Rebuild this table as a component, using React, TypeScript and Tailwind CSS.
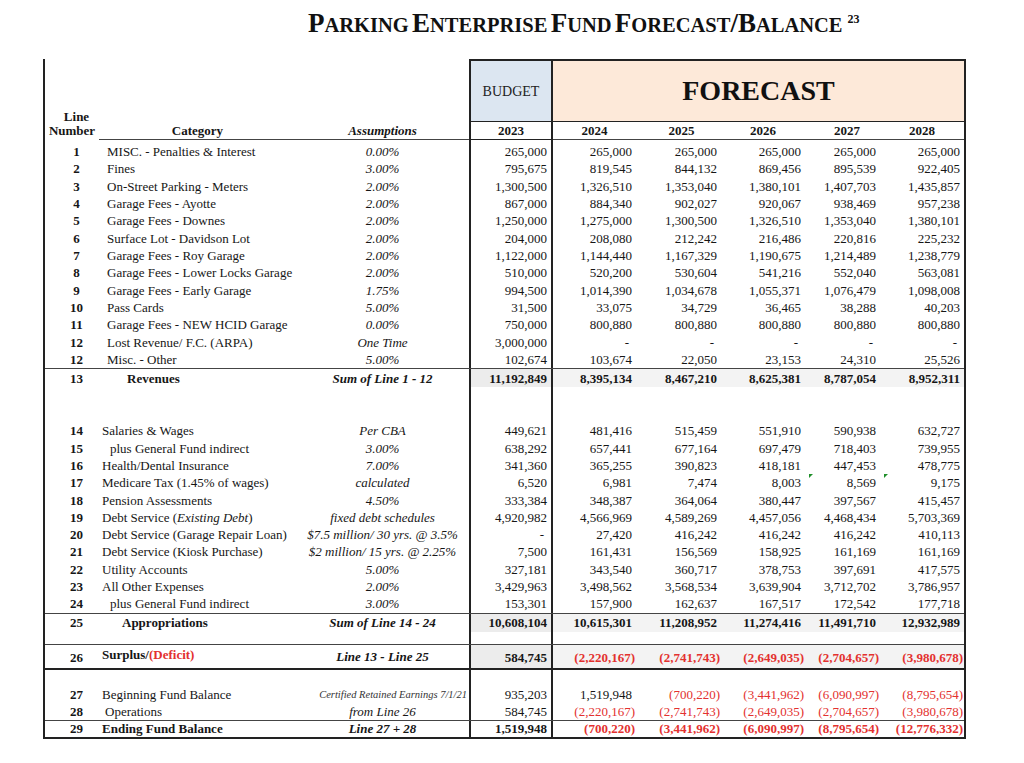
import React from 'react'

const cols = [
  'w-[54px]',
  'w-[197px]',
  'w-[173px]',
  'w-[84px]',
  'w-[83px]',
  'w-[85px]',
  'w-[84px]',
  'w-[75px]',
  'w-[84px]',
]

const red = 'text-[#e3312f]'

interface RowProps {
  h: string
  n?: string
  label?: React.ReactNode
  labelClass?: string
  assume?: React.ReactNode
  assumeClass?: string
  values?: string[]
  bold?: boolean
  shade?: boolean
  align?: string
  border?: string
  marks?: number[]
}

function Amount({ v, bold }: { v: string; bold?: boolean }) {
  const neg = v.startsWith('(')
  const dash = v === '-'
  return (
    <span
      className={`${neg ? red : ''} ${bold ? 'font-bold' : ''} ${
        dash ? 'pr-[7px]' : neg ? 'pr-[1px]' : 'pr-[4px]'
      }`}
    >
      {v}
    </span>
  )
}

function Row({
  h,
  n,
  label,
  labelClass = 'pl-[8px]',
  assume,
  assumeClass = 'justify-center',
  values = ['', '', '', '', '', ''],
  bold,
  shade,
  align = 'items-center',
  border = '',
  marks = [],
}: RowProps) {
  return (
    <div className={`flex ${h} ${border}`}>
      <div className={`${cols[0]} flex ${align} justify-center pl-[9px] font-bold`}>{n}</div>
      <div className={`${cols[1]} flex ${align} whitespace-nowrap ${labelClass} ${bold ? 'font-bold' : ''}`}>
        {label}
      </div>
      <div className={`${cols[2]} flex ${align} whitespace-nowrap italic ${assumeClass} ${bold ? 'font-bold' : ''}`}>
        {assume}
      </div>
      {values.map((v, i) => (
        <div
          key={i}
          className={`${cols[i + 3]} relative flex ${align} justify-end ${
            i === 0 ? 'border-x-2 border-[#222]' : ''
          } ${shade ? (i === 0 ? 'bg-[#ececec]' : 'bg-[#f3f3f3]') : ''}`}
        >
          {marks.includes(i) && (
            <span className="absolute top-0 left-[4px] h-0 w-0 border-t-[4px] border-r-[4px] border-t-[#1f8f2a] border-r-transparent" />
          )}
          {v && <Amount v={v} bold={bold} />}
        </div>
      ))}
    </div>
  )
}

const revenues: [string, string, string, string[]][] = [
  ['1', 'MISC. - Penalties & Interest', '0.00%', ['265,000', '265,000', '265,000', '265,000', '265,000', '265,000']],
  ['2', 'Fines', '3.00%', ['795,675', '819,545', '844,132', '869,456', '895,539', '922,405']],
  ['3', 'On-Street Parking - Meters', '2.00%', ['1,300,500', '1,326,510', '1,353,040', '1,380,101', '1,407,703', '1,435,857']],
  ['4', 'Garage Fees - Ayotte', '2.00%', ['867,000', '884,340', '902,027', '920,067', '938,469', '957,238']],
  ['5', 'Garage Fees - Downes', '2.00%', ['1,250,000', '1,275,000', '1,300,500', '1,326,510', '1,353,040', '1,380,101']],
  ['6', 'Surface Lot - Davidson Lot', '2.00%', ['204,000', '208,080', '212,242', '216,486', '220,816', '225,232']],
  ['7', 'Garage Fees - Roy Garage', '2.00%', ['1,122,000', '1,144,440', '1,167,329', '1,190,675', '1,214,489', '1,238,779']],
  ['8', 'Garage Fees - Lower Locks Garage', '2.00%', ['510,000', '520,200', '530,604', '541,216', '552,040', '563,081']],
  ['9', 'Garage Fees - Early Garage', '1.75%', ['994,500', '1,014,390', '1,034,678', '1,055,371', '1,076,479', '1,098,008']],
  ['10', 'Pass Cards', '5.00%', ['31,500', '33,075', '34,729', '36,465', '38,288', '40,203']],
  ['11', 'Garage Fees - NEW HCID Garage', '0.00%', ['750,000', '800,880', '800,880', '800,880', '800,880', '800,880']],
  ['12', 'Lost Revenue/ F.C. (ARPA)', 'One Time', ['3,000,000', '-', '-', '-', '-', '-']],
  ['12', 'Misc. - Other', '5.00%', ['102,674', '103,674', '22,050', '23,153', '24,310', '25,526']],
]

const expenses: [string, React.ReactNode, string, string[], string?][] = [
  ['14', 'Salaries & Wages', 'Per CBA', ['449,621', '481,416', '515,459', '551,910', '590,938', '632,727'], 'pl-[3px]'],
  ['15', 'plus General Fund indirect', '3.00%', ['638,292', '657,441', '677,164', '697,479', '718,403', '739,955'], 'pl-[11px]'],
  ['16', 'Health/Dental Insurance', '7.00%', ['341,360', '365,255', '390,823', '418,181', '447,453', '478,775'], 'pl-[3px]'],
  ['17', 'Medicare Tax (1.45% of wages)', 'calculated', ['6,520', '6,981', '7,474', '8,003', '8,569', '9,175'], 'pl-[3px]'],
  ['18', 'Pension Assessments', '4.50%', ['333,384', '348,387', '364,064', '380,447', '397,567', '415,457'], 'pl-[3px]'],
  [
    '19',
    <>
      Debt Service (<i>Existing Debt</i>)
    </>,
    'fixed debt schedules',
    ['4,920,982', '4,566,969', '4,589,269', '4,457,056', '4,468,434', '5,703,369'],
    'pl-[3px]',
  ],
  ['20', 'Debt Service (Garage Repair Loan)', '$7.5 million/ 30 yrs. @ 3.5%', ['-', '27,420', '416,242', '416,242', '416,242', '410,113'], 'pl-[3px]'],
  ['21', 'Debt Service (Kiosk Purchase)', '$2 million/ 15 yrs. @ 2.25%', ['7,500', '161,431', '156,569', '158,925', '161,169', '161,169'], 'pl-[3px]'],
  ['22', 'Utility Accounts', '5.00%', ['327,181', '343,540', '360,717', '378,753', '397,691', '417,575'], 'pl-[3px]'],
  ['23', 'All Other Expenses', '2.00%', ['3,429,963', '3,498,562', '3,568,534', '3,639,904', '3,712,702', '3,786,957'], 'pl-[3px]'],
  ['24', 'plus General Fund indirect', '3.00%', ['153,301', '157,900', '162,637', '167,517', '172,542', '177,718'], 'pl-[11px]'],
]

function Sc({ w }: { w: string }) {
  return (
    <>
      <span className="text-[27px]">{w[0]}</span>
      <span className="text-[20.5px]">{w.slice(1)}</span>
    </>
  )
}

export default function App() {
  return (
    <div className="h-[763px] w-[1024px] overflow-hidden bg-white font-['Liberation_Serif','Times_New_Roman',serif] text-[13px] text-[#161616]">
      <div className="flex h-[59px] items-start pl-[308px] pt-[7px] font-bold text-[#111]">
        <h1 className="whitespace-nowrap leading-[32px]">
          <Sc w="PARKING" /> <Sc w="ENTERPRISE" /> <Sc w="FUND" /> <Sc w="FORECAST" />
          <span className="text-[27px]">/</span>
          <Sc w="BALANCE" />
        </h1>
        <span className="ml-[5px] mt-[6px] text-[12px] leading-[12px]">23</span>
      </div>

      <div className="ml-[43px] w-[923px] border-x-2 border-b-2 border-[#222]">
        {/* header block */}
        <div className="flex h-[63px]">
          <div className={`${cols[0]} flex items-end justify-center pl-[9px] font-bold leading-[11px]`}>Line</div>
          <div className={cols[1]} />
          <div className={cols[2]} />
          <div className={`${cols[3]} flex items-center justify-center border-x-2 border-t-2 border-b border-[#222] bg-[#dce6f1] text-[14px] text-[#222]`}>
            BUDGET
          </div>
          <div className="flex w-[411px] items-center justify-center border-t-2 border-b border-[#222] bg-[#fde9d9] text-[28px] font-bold text-[#111]">
            FORECAST
          </div>
        </div>
        <div className="flex h-[18px] font-bold">
          <div className={`${cols[0]} flex items-center justify-center`}>Number</div>
          <div className={`${cols[1]} flex items-center justify-center border-b border-[#444]`}>Category</div>
          <div className={`${cols[2]} flex items-center justify-center border-b border-[#444] italic`}>Assumptions</div>
          <div className={`${cols[3]} flex items-center justify-center border-x-2 border-b border-[#222]`}>2023</div>
          <div className={`${cols[4]} flex items-center justify-center border-b border-[#444]`}>2024</div>
          <div className={`${cols[5]} flex items-center justify-center border-b border-[#444] pl-[6px]`}>2025</div>
          <div className={`${cols[6]} flex items-center justify-center border-b border-[#444]`}>2026</div>
          <div className={`${cols[7]} flex items-center justify-center border-b border-[#444] pl-[9px]`}>2027</div>
          <div className={`${cols[8]} flex items-center justify-center border-b border-[#444]`}>2028</div>
        </div>
        <Row h="h-[3px]" />

        {/* revenues */}
        <div className="border-b border-[#444]">
          {revenues.map(([n, label, a, v], i) => (
            <Row key={i} h="h-[17.33px]" n={n} label={label} assume={a} values={v} />
          ))}
        </div>
        <Row
          h="h-[18px]"
          n="13"
          label="Revenues"
          labelClass="pl-[28px]"
          assume="Sum of Line 1 - 12"
          values={['11,192,849', '8,395,134', '8,467,210', '8,625,381', '8,787,054', '8,952,311']}
          bold
          shade
        />
        <Row h="h-[35px]" />

        {/* appropriations */}
        <div className="border-b border-[#444]">
          {expenses.map(([n, label, a, v, pad], i) => (
            <Row
              key={i}
              h="h-[17.33px]"
              n={n}
              label={label}
              labelClass={pad}
              assume={a}
              values={v}
              marks={n === '17' ? [4, 5] : []}
            />
          ))}
        </div>
        <Row
          h="h-[18px]"
          n="25"
          label="Appropriations"
          labelClass="pl-[23px]"
          assume="Sum of Line 14 - 24"
          values={['10,608,104', '10,615,301', '11,208,952', '11,274,416', '11,491,710', '12,932,989']}
          bold
          shade
        />
        <Row h="h-[13px]" border="border-b border-[#444]" />

        <Row
          h="h-[25px]"
          n="26"
          label={
            <>
              Surplus/<span className={red}>(Deficit)</span>
            </>
          }
          labelClass="pl-[3px] pb-[3px]"
          assume="Line 13 - Line 25"
          assumeClass="justify-center pb-[1px]"
          values={['584,745', '(2,220,167)', '(2,741,743)', '(2,649,035)', '(2,704,657)', '(3,980,678)']}
          bold
          shade
          align="items-end"
          border="border-b-2 border-[#222]"
        />
        <Row h="h-[16px]" />

        <Row
          h="h-[17.33px]"
          n="27"
          label="Beginning Fund Balance"
          labelClass="pl-[3px]"
          assume="Certified Retained Earnings 7/1/21"
          assumeClass="justify-end pr-[2px] text-[10.5px] text-[#333]"
          values={['935,203', '1,519,948', '(700,220)', '(3,441,962)', '(6,090,997)', '(8,795,654)']}
        />
        <Row
          h="h-[17.33px]"
          n="28"
          label="Operations"
          labelClass="pl-[6px]"
          assume="from Line 26"
          values={['584,745', '(2,220,167)', '(2,741,743)', '(2,649,035)', '(2,704,657)', '(3,980,678)']}
          border="border-b border-[#444]"
        />
        <Row
          h="h-[16px]"
          n="29"
          label="Ending Fund Balance"
          labelClass="pl-[3px]"
          assume="Line 27 + 28"
          values={['1,519,948', '(700,220)', '(3,441,962)', '(6,090,997)', '(8,795,654)', '(12,776,332)']}
          bold
        />
      </div>
    </div>
  )
}
